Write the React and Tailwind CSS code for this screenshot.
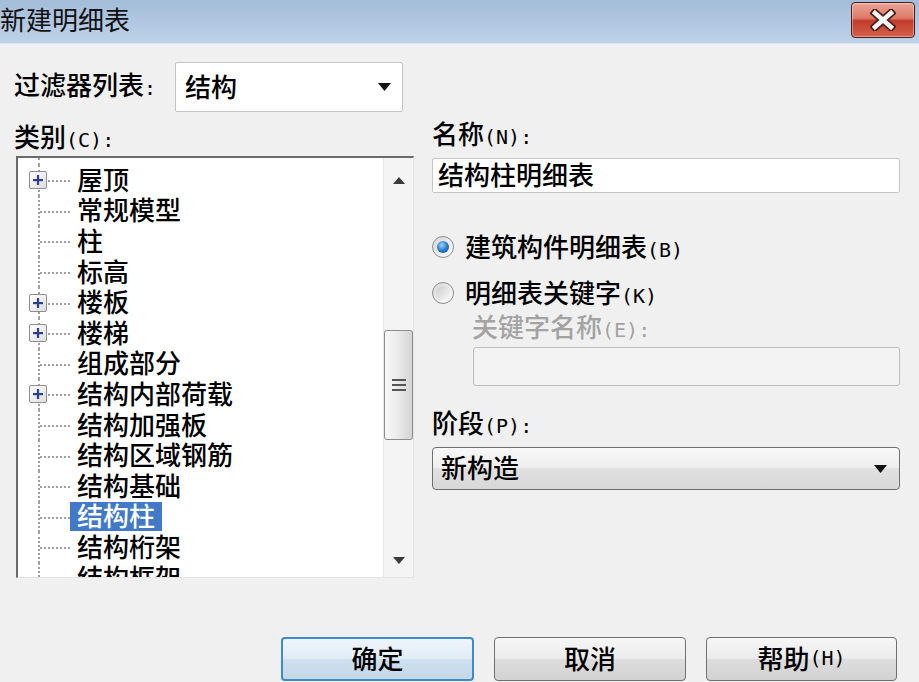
import React from "react";

const treeItems = [
  { label: "屋顶", plus: true },
  { label: "常规模型" },
  { label: "柱" },
  { label: "标高" },
  { label: "楼板", plus: true },
  { label: "楼梯", plus: true },
  { label: "组成部分" },
  { label: "结构内部荷载", plus: true },
  { label: "结构加强板" },
  { label: "结构区域钢筋" },
  { label: "结构基础" },
  { label: "结构柱", selected: true },
  { label: "结构桁架" },
  { label: "结构框架" },
];

// half-width latin bits like "(C):"
const Latin = ({ children }) => (
  <span className="font-['DejaVu_Sans_Mono',monospace] text-[20px] font-normal leading-none">{children}</span>
);

const DownTri = ({ className = "" }) => (
  <svg width="13" height="8" viewBox="0 0 13 8" className={className}>
    <polygon points="0,0 13,0 6.5,8" fill="#111" />
  </svg>
);

const PlusBox = () => (
  <span className="absolute left-[11px] top-1/2 flex h-[18px] w-[18px] -translate-y-1/2 items-center justify-center rounded-[2px] border border-[#8e8e8e] bg-[linear-gradient(135deg,#ffffff,#dedede)]">
    <svg width="12" height="12" viewBox="0 0 12 12">
      <rect x="1" y="5" width="10" height="2.2" fill="#2a3f8f" />
      <rect x="4.9" y="1" width="2.2" height="10" fill="#2a3f8f" />
    </svg>
  </span>
);

const TreeRow = ({ item }) => (
  <div className="flex h-[30.6px] items-center">
    <span className="relative h-full w-[52px] shrink-0">
      <span className="absolute bottom-0 left-[20px] top-0 border-l-2 border-dotted border-[#a0a0a0]" />
      <span className="absolute left-[22px] right-0 top-1/2 border-t-2 border-dotted border-[#a0a0a0]" />
      {item.plus && <PlusBox />}
    </span>
    <span
      className={
        "h-[29px] whitespace-nowrap px-[7px] leading-[26px] " +
        (item.selected ? "bg-[#4178c8] text-white" : "text-black")
      }
    >
      {item.label}
    </span>
  </div>
);

const ScrollBar = () => (
  <div className="flex w-[30px] shrink-0 flex-col border-l border-[#e8e8e8] bg-[#f4f4f4]">
    <div className="flex h-[44px] items-center justify-center">
      <svg width="12" height="7" viewBox="0 0 12 7">
        <polygon points="0,7 12,7 6,0" fill="#3a3a3a" />
      </svg>
    </div>
    <div className="h-[128px]" />
    <div className="flex h-[110px] flex-col items-center justify-center gap-[3px] rounded-[3px] border border-[#8c8c8c] bg-[linear-gradient(90deg,#f8f8f8,#ececec_45%,#d4d4d4)]">
      <span className="h-[2px] w-[14px] bg-[#555]" />
      <span className="h-[2px] w-[14px] bg-[#555]" />
      <span className="h-[2px] w-[14px] bg-[#555]" />
    </div>
    <div className="flex-1" />
    <div className="flex h-[34px] items-center justify-center">
      <svg width="12" height="7" viewBox="0 0 12 7">
        <polygon points="0,0 12,0 6,7" fill="#3a3a3a" />
      </svg>
    </div>
  </div>
);

const Radio = ({ checked }) => (
  <span className="flex h-[22px] w-[22px] shrink-0 items-center justify-center rounded-full border border-[#8f8f8f] bg-[linear-gradient(135deg,#d6d6d6,#ffffff)]">
    {checked ? (
      <span className="h-[12px] w-[12px] rounded-full bg-[radial-gradient(circle_at_40%_35%,#9fd2f6,#2a7fce_50%,#0d3f7a)]" />
    ) : (
      <span className="h-[14px] w-[14px] rounded-full bg-[linear-gradient(135deg,#cdcdcd,#f7f7f7)]" />
    )}
  </span>
);

const Button = ({ children, primary, width }) => (
  <button
    className={
      "flex h-[44px] items-center justify-center rounded-[4px] pb-[3px] leading-[30px] text-black " +
      width +
      " " +
      (primary
        ? "border-2 border-[#3c8ccb] bg-[linear-gradient(#eef5fa,#e0ecf5_50%,#cfe0ee_50%,#c4d8e8)]"
        : "border border-[#707070] bg-[linear-gradient(#f6f6f6,#ebebeb_50%,#dddddd_50%,#d2d2d2)]")
    }
  >
    {children}
  </button>
);

export default function App() {
  return (
    <div className="h-[682px] w-[919px] overflow-hidden bg-[#f0f0f0] font-['Noto_Sans_CJK_SC',sans-serif] text-[26px] font-medium text-black">
      {/* title bar */}
      <div className="flex h-[44px] items-start justify-between border-b border-[#dce6f1] bg-[linear-gradient(#a3bcd9,#bfd2e9)]">
        <span className="pt-[4px] font-normal leading-[30px] text-[#111]">新建明细表</span>
        <div className="mr-[4px] mt-[2px] flex h-[36px] w-[64px] items-center justify-center rounded-[4px] border border-[#4a1f1a] bg-[linear-gradient(#eba697,#dc7864_45%,#c23a2b_52%,#d4634c)] shadow-[inset_0_0_0_1px_rgba(255,255,255,0.35)]">
          <svg width="26" height="22" viewBox="0 0 26 22">
            <path d="M5 4 L21 18 M21 4 L5 18" stroke="#4a1f1a" strokeWidth="8" strokeLinecap="square" />
            <path d="M5 4 L21 18 M21 4 L5 18" stroke="#f4f4f4" strokeWidth="4.5" strokeLinecap="square" />
          </svg>
        </div>
      </div>

      <div className="mt-[18px] flex gap-[18px] pl-[14px]">
        {/* left column */}
        <div className="flex w-[400px] flex-col">
          <div className="flex h-[50px] items-center">
            <span className="w-[161px] pb-[6px] leading-[30px]">
              过滤器列表<Latin>:</Latin>
            </span>
            <div className="flex h-[50px] w-[228px] items-center justify-between rounded-[2px] border border-[#c4c4c4] bg-white pl-[9px] pr-[11px]">
              <span className="pb-[2px] leading-[30px]">结构</span>
              <DownTri />
            </div>
          </div>
          <div className="mt-[9px] h-[30px] leading-[30px]">
            类别<Latin>(C):</Latin>
          </div>
          <div className="ml-[2px] mt-[5px] flex h-[422px] w-[398px] border-b border-l-2 border-r border-t-2 border-b-[#e4e4e4] border-l-[#6a6a6a] border-r-[#e4e4e4] border-t-[#6a6a6a] bg-white">
            <div className="flex-1 overflow-hidden">
              <div className="relative h-[7px] w-[52px]">
                <span className="absolute bottom-0 left-[20px] top-0 border-l-2 border-dotted border-[#a0a0a0]" />
              </div>
              {treeItems.map((item) => (
                <TreeRow key={item.label} item={item} />
              ))}
            </div>
            <ScrollBar />
          </div>
        </div>

        {/* right column */}
        <div className="flex w-[468px] flex-col pt-[56px]">
          <div className="h-[30px] leading-[30px]">
            名称<Latin>(N):</Latin>
          </div>
          <div className="mt-[10px] flex h-[35px] items-center rounded-[2px] border border-[#c6c6c6] bg-white pl-[5px]">
            <span className="pb-[3px] leading-[30px]">结构柱明细表</span>
          </div>
          <div className="mt-[39px] flex h-[30px] items-center gap-[11px]">
            <Radio checked />
            <span className="pb-[2px] leading-[30px]">
              建筑构件明细表<Latin>(B)</Latin>
            </span>
          </div>
          <div className="mt-[16px] flex h-[30px] items-center gap-[11px]">
            <Radio />
            <span className="pb-[2px] leading-[30px]">
              明细表关键字<Latin>(K)</Latin>
            </span>
          </div>
          <div className="ml-[40px] mt-[3px] h-[30px] leading-[30px] text-[#a3a3a3]">
            关键字名称<Latin>(E):</Latin>
          </div>
          <div className="ml-[41px] mt-[6px] h-[39px] rounded-[3px] border border-[#bdbdbd] bg-[#f3f3f3]" />
          <div className="mt-[21px] h-[30px] leading-[30px]">
            阶段<Latin>(P):</Latin>
          </div>
          <div className="mt-[10px] flex h-[43px] items-center justify-between rounded-[4px] border border-[#6f6f6f] bg-[linear-gradient(#f8f8f8,#eeeeee_50%,#e0e0e0_50%,#d8d8d8)] pl-[8px] pr-[12px]">
            <span className="pb-[3px] leading-[30px]">新构造</span>
            <DownTri />
          </div>
        </div>
      </div>

      {/* buttons */}
      <div className="mt-[59px] flex justify-end gap-[20px] pr-[22px]">
        <Button primary width="w-[193px]">确定</Button>
        <Button width="w-[192px]">取消</Button>
        <Button width="w-[191px]">
          帮助<Latin>(H)</Latin>
        </Button>
      </div>
    </div>
  );
}
